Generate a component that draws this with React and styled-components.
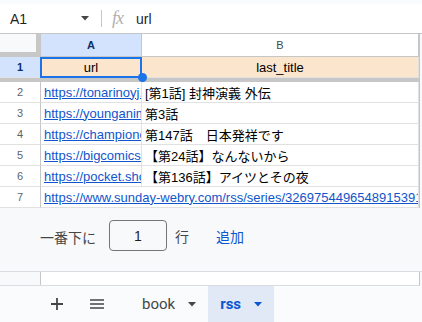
import React from 'react';
import styled, { createGlobalStyle } from 'styled-components';

const GlobalStyle = createGlobalStyle`
  html, body {
    margin: 0;
    padding: 0;
  }
  body {
    width: 422px;
    height: 322px;
    overflow: hidden;
    background: #f8f9fa;
    font-family: "Liberation Sans", "Noto Sans CJK JP", Arial, sans-serif;
  }
`;

const Page = styled.div`
  display: flex;
  flex-direction: column;
  width: 422px;
  height: 322px;
  background: #f8f9fa;
`;

const TopStrip = styled.div`
  height: 4px;
  background: #f9fbfd;
`;

const FormulaBar = styled.div`
  height: 29px;
  background: #fff;
  border-bottom: 1px solid #c4c7c5;
  display: flex;
  align-items: center;
`;

const NameBox = styled.div`
  width: 92px;
  box-sizing: border-box;
  padding: 0 3px 0 10px;
  display: flex;
  align-items: center;
  justify-content: space-between;
  font-size: 14px;
  color: #1f1f1f;
`;

const Divider = styled.div`
  width: 1px;
  height: 17px;
  background: #c4c7c5;
  margin-left: 9px;
`;

const Fx = styled.span`
  margin-left: 10px;
  width: 16px;
  font-family: "Liberation Serif", serif;
  font-style: italic;
  font-size: 18px;
  color: #b0b0b0;
  letter-spacing: -1px;
`;

const FormulaText = styled.span`
  margin-left: 8px;
  font-size: 14px;
  color: #1f1f1f;
`;

const Grid = styled.div`
  display: flex;
  flex-direction: column;
  width: 419px;
  background: #fff;
  border-right: 1px solid #c4c7c5;
`;

const Row = styled.div`
  display: flex;
  height: ${p => p.$h || 21}px;
`;

const Corner = styled.div`
  width: 36px;
  height: 18px;
  background: #f8f9fa;
  border-right: 5px solid #c7c7c7;
  border-bottom: 5px solid #c7c7c7;
`;

const ColHead = styled.div`
  width: ${p => p.$w}px;
  box-sizing: border-box;
  height: 23px;
  display: flex;
  align-items: center;
  justify-content: center;
  font-size: 11px;
  font-weight: ${p => (p.$active ? 700 : 400)};
  color: ${p => (p.$active ? '#0b2f6b' : '#444746')};
  background: ${p => (p.$active ? '#d3e3fd' : '#fff')};
  border-right: 1px solid #c4c7c5;
  border-bottom: 1px solid #c4c7c5;
`;

const RowHead = styled.div`
  width: 41px;
  box-sizing: border-box;
  flex-shrink: 0;
  display: flex;
  align-items: center;
  justify-content: center;
  font-size: 11px;
  font-weight: ${p => (p.$active ? 700 : 400)};
  color: ${p => (p.$active ? '#0b2f6b' : '#5f6368')};
  background: ${p => (p.$active ? '#d3e3fd' : '#fff')};
  border-right: 1px solid #c4c7c5;
  border-bottom: 1px solid #e1e1e1;
`;

const Cell = styled.div`
  position: relative;
  width: ${p => p.$w}px;
  flex-shrink: 0;
  box-sizing: border-box;
  display: flex;
  align-items: center;
  justify-content: ${p => (p.$center ? 'center' : 'flex-start')};
  padding: 0 3px;
  overflow: hidden;
  white-space: nowrap;
  font-size: 13px;
  color: #000;
  background: ${p => p.$bg || '#fff'};
  border-right: 1px solid #e1e1e1;
  border-bottom: 1px solid #e1e1e1;
`;

const Link = styled.span`
  color: #1155cc;
  text-decoration: underline;
`;

const Selected = styled.div`
  position: absolute;
  inset: 0 -1px -1px -1px;
  border: 2px solid #1a73e8;
  pointer-events: none;
`;

const Handle = styled.div`
  position: absolute;
  right: -6px;
  bottom: -5px;
  width: 9px;
  height: 9px;
  border-radius: 50%;
  background: #1a73e8;
  z-index: 2;
`;

const SelCell = styled(Cell)`
  overflow: visible;
  z-index: 1;
`;

const FreezeBar = styled.div`
  height: 4px;
  background: #c7c7c7;
`;

const AddRows = styled.div`
  height: 64px;
  display: flex;
  align-items: center;
  padding-left: 40px;
  padding-top: 1px;
  box-sizing: border-box;
  background: #f8f9fa;
  font-size: 14px;
  color: #444746;
  border-bottom: 1px solid #dadce0;
`;

const CountInput = styled.div`
  width: 58px;
  height: 31px;
  box-sizing: border-box;
  margin-left: 13px;
  margin-top: -9px;
  border: 1px solid #747775;
  border-radius: 4px;
  display: flex;
  align-items: center;
  justify-content: center;
  color: #1f1f1f;
  background: #f8f9fa;
`;

const Label = styled.span`
  margin-left: ${p => p.$ml || 0}px;
  margin-top: ${p => p.$mt || 0}px;
  color: ${p => p.$color || '#444746'};
`;

const StubRow = styled.div`
  display: flex;
  height: 13px;
  width: 419px;
  background: #fff;
  border-bottom: 1px solid #dadce0;
  border-right: 1px solid #c4c7c5;
`;

const StubHead = styled.div`
  width: 41px;
  box-sizing: border-box;
  background: #f8f9fa;
  border-right: 1px solid #c4c7c5;
`;

const TabBar = styled.div`
  flex: 1;
  display: flex;
  align-items: stretch;
  background: #f9fbfd;
  font-family: Roboto, "Liberation Sans", sans-serif;
`;

const IconButton = styled.div`
  width: ${p => p.$w}px;
  display: flex;
  align-items: center;
  justify-content: center;
  margin-left: ${p => p.$ml || 0}px;
`;

const Tab = styled.div`
  display: flex;
  align-items: center;
  padding: 0 12px;
  margin-left: ${p => p.$ml || 0}px;
  gap: 13px;
  font-size: 15px;
  font-weight: ${p => (p.$active ? 700 : 400)};
  color: ${p => (p.$active ? '#0b57d0' : '#444746')};
  background: ${p => (p.$active ? '#e1e9f7' : 'transparent')};
`;

const Caret = ({ color = '#444746' }) => (
  <svg width="8" height="5" viewBox="0 0 8 5">
    <path d="M0 0h8L4 4.5z" fill={color} />
  </svg>
);

const rows = [
  { n: 2, url: 'https://tonarinoyj.jp/rss/series/13932016480028984490', title: '[第1話] 封神演義 外伝' },
  { n: 3, url: 'https://younganimal.com/rss/series', title: '第3話' },
  { n: 4, url: 'https://championcross.jp/rss/series', title: '第147話　日本発祥です' },
  { n: 5, url: 'https://bigcomics.jp/rss/series', title: '【第24話】なんないから' },
  { n: 6, url: 'https://pocket.shonenmagazine.com/rss/series', title: '【第136話】アイツとその夜' },
];

export default function App() {
  return (
    <Page>
      <GlobalStyle />
      <TopStrip />
      <FormulaBar>
        <NameBox>
          <span>A1</span>
          <Caret />
        </NameBox>
        <Divider />
        <Fx>fx</Fx>
        <FormulaText>url</FormulaText>
      </FormulaBar>

      <Grid>
        <Row $h={23}>
          <Corner />
          <ColHead $w={101} $active>A</ColHead>
          <ColHead $w={277}>B</ColHead>
        </Row>
        <Row>
          <RowHead $active>1</RowHead>
          <SelCell $w={101} $bg="#fce5cd" $center>
            url
            <Selected />
            <Handle />
          </SelCell>
          <Cell $w={277} $bg="#fce5cd" $center>last_title</Cell>
        </Row>
        <FreezeBar />
        {rows.map(r => (
          <Row key={r.n}>
            <RowHead>{r.n}</RowHead>
            <Cell $w={101}><Link>{r.url}</Link></Cell>
            <Cell $w={277}>{r.title}</Cell>
          </Row>
        ))}
        <Row>
          <RowHead>7</RowHead>
          <Cell $w={378}>
            <Link>https://www.sunday-webry.com/rss/series/3269754496548915391</Link>
          </Cell>
        </Row>
      </Grid>

      <AddRows>
        <Label $mt={-7}>一番下に</Label>
        <CountInput>1</CountInput>
        <Label $ml={8} $mt={-9}>行</Label>
        <Label $ml={27} $mt={-9} $color="#0b57d0">追加</Label>
      </AddRows>

      <StubRow>
        <StubHead />
      </StubRow>

      <TabBar>
        <IconButton $w={20} $ml={47}>
          <svg width="12" height="12" viewBox="0 0 12 12">
            <path d="M6 0v12M0 6h12" stroke="#444746" strokeWidth="1.8" />
          </svg>
        </IconButton>
        <IconButton $w={20} $ml={20}>
          <svg width="14" height="10" viewBox="0 0 14 10">
            <path d="M0 1h14M0 5h14M0 9h14" stroke="#444746" strokeWidth="1.6" />
          </svg>
        </IconButton>
        <Tab $ml={23}>
          book
          <Caret />
        </Tab>
        <Tab $active>
          rss
          <Caret color="#0b57d0" />
        </Tab>
      </TabBar>
    </Page>
  );
}
